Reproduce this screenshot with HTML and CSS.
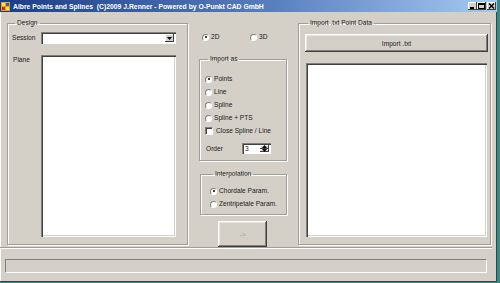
FILE: index.html
```html
<!DOCTYPE html>
<html lang="en">
<head>
    <meta charset="UTF-8">
    <title>Albre Points and Splines</title>
    <link rel="stylesheet" href="styles.css">
</head>
<body>
    <div class="window">
        <div class="titlebar">
            <svg class="app-icon" width="9" height="9" viewBox="0 0 9 9">
                <rect x="0" y="0" width="9" height="9" fill="#e8a020"/>
                <rect x="1" y="1" width="3" height="3" fill="#f8e060"/>
                <rect x="5" y="1" width="3" height="3" fill="#3060c0"/>
                <rect x="1" y="5" width="3" height="3" fill="#c03020"/>
                <rect x="5" y="5" width="3" height="3" fill="#f8e060"/>
            </svg>
            <span class="title">Albre Points and Splines&nbsp; (C)2009 J.Renner - Powered by O-Punkt CAD GmbH</span>
            <div class="caption-buttons">
                <span class="cap-btn"><svg width="7" height="6" viewBox="0 0 7 6"><rect x="1" y="4" width="4" height="2" fill="#000"/></svg></span>
                <span class="cap-btn"><svg width="7" height="6" viewBox="0 0 7 6"><rect x="0.5" y="0.5" width="6" height="5" fill="none" stroke="#000"/><rect x="0" y="0" width="7" height="2" fill="#000"/></svg></span>
                <span class="cap-btn close"><svg width="7" height="6" viewBox="0 0 7 6"><path d="M1 0.5 L6 5.5 M6 0.5 L1 5.5" stroke="#000" stroke-width="1.4"/></svg></span>
            </div>
        </div>

        <div class="client">
            <div class="panel">
                <fieldset class="group design">
                    <legend>Design</legend>
                    <div class="row">
                        <span class="label">Session</span>
                        <div class="combo">
                            <span class="combo-btn"><svg width="5" height="3" viewBox="0 0 5 3"><path d="M0 0 H5 L2.5 3 Z" fill="#000"/></svg></span>
                        </div>
                    </div>
                    <div class="row plane-row">
                        <span class="label">Plane</span>
                        <div class="listbox plane-list"></div>
                    </div>
                </fieldset>

                <div class="middle">
                    <div class="dims">
                        <span class="option"><span class="radio checked"></span>2D</span>
                        <span class="option"><span class="radio"></span>3D</span>
                    </div>

                    <fieldset class="group import-as">
                        <legend>Import as</legend>
                        <div class="option"><span class="radio checked"></span>Points</div>
                        <div class="option"><span class="radio"></span>Line</div>
                        <div class="option"><span class="radio"></span>Spline</div>
                        <div class="option"><span class="radio"></span>Spline + PTS</div>
                        <div class="option check-row"><span class="checkbox"></span>Close Spline / Line</div>
                        <div class="order-row">
                            <span class="order-label">Order</span>
                            <div class="spinner">
                                <span class="spin-value">3</span>
                                <span class="spin-btns">
                                    <span class="spin-btn"><svg width="5" height="3" viewBox="0 0 5 3"><path d="M0 3 H5 L2.5 0 Z" fill="#000"/></svg></span>
                                    <span class="spin-btn"><svg width="5" height="3" viewBox="0 0 5 3"><path d="M0 0 H5 L2.5 3 Z" fill="#000"/></svg></span>
                                </span>
                            </div>
                        </div>
                    </fieldset>

                    <fieldset class="group interp">
                        <legend>Interpolation</legend>
                        <div class="option"><span class="radio checked"></span>Chordale Param.</div>
                        <div class="option"><span class="radio"></span>Zentripetale Param.</div>
                    </fieldset>

                    <button class="btn go" disabled>-&gt;</button>
                </div>

                <fieldset class="group import">
                    <legend>Import .txt Point Data</legend>
                    <button class="btn import-btn">Import .txt</button>
                    <div class="listbox data-list"></div>
                </fieldset>
            </div>
            <div class="statusbar"></div>
        </div>
    </div>
</body>
</html>
```

FILE: styles.css
```css
body { margin: 0; background: #3a8a84; font-family: "Liberation Sans", Arial, sans-serif; font-size: 6.6px; color: #1a1a1a; }

.window { width: 497px; height: 282px; background: #d4d0c8; box-shadow: inset -1px -1px 0 #404040, inset 1px 1px 0 #fff; overflow: hidden; }

/* title bar */
.titlebar { height: 12px; display: flex; align-items: center; background: linear-gradient(to right, #1a3c86, #5a7fc0 55%, #a6caf0); padding-left: 1px; }
.app-icon { flex: none; margin-right: 3px; }
.title { color: #fff; font-weight: bold; font-size: 6.8px; white-space: pre; flex: 1; }
.caption-buttons { display: flex; margin-right: 1px; }
.cap-btn { width: 9px; height: 8px; display: flex; align-items: center; justify-content: center; background: #d4d0c8; box-shadow: inset -1px -1px 0 #404040, inset 1px 1px 0 #fff; }
.cap-btn.close { margin-left: 1px; }

/* client area */
.client { padding: 7px 0 0 7px; }
.panel { display: flex; height: 226px; padding-bottom: 2px; border-bottom: 1px solid #a09d96; box-shadow: 0 1px 0 #fff; margin-left: -7px; padding-left: 7px; margin-right: 5px; }

.group { margin: 0; padding: 0; border: 1px solid #a09d96; box-shadow: 1px 1px 0 #fff, inset 1px 1px 0 #fff; min-width: 0; box-sizing: border-box; }
.group legend { padding: 0 2px; margin-left: 3px; line-height: 8px; font-size: 6.6px; }

/* design group */
.design { width: 181px; height: 226px; padding: 5px 0 0 4px; }
.row { display: flex; align-items: flex-start; }
.label { width: 29px; flex: none; line-height: 12px; }
.combo { width: 135px; height: 12px; box-sizing: border-box; background: #fff; box-shadow: inset 1px 1px 0 #808080, inset 2px 2px 0 #404040, inset -1px -1px 0 #fff; display: flex; justify-content: flex-end; padding: 2px; }
.combo-btn { width: 9px; height: 8px; background: #d4d0c8; box-shadow: inset -1px -1px 0 #404040, inset 1px 1px 0 #fff; display: flex; align-items: center; justify-content: center; }
.plane-row { margin-top: 11px; }
.plane-row .label { line-height: 9px; padding-left: 1px; width: 28px; }
.listbox { background: #fff; box-sizing: border-box; box-shadow: inset 1px 1px 0 #808080, inset 2px 2px 0 #404040, inset -1px -1px 0 #fff, inset -2px -2px 0 #d4d0c8; }
.plane-list { width: 135px; height: 182px; }

/* middle column */
.middle { width: 110px; flex: none; }
.dims { display: flex; margin-top: 13px; padding-left: 14px; }
.dims .option { width: 50px; }
.option { display: flex; align-items: center; height: 10px; line-height: 10px; white-space: nowrap; }
.radio { width: 7px; height: 7px; border-radius: 50%; background: #fff; box-sizing: border-box; border: 1px solid; border-color: #808080 #fff #fff #808080; margin-right: 2px; position: relative; flex: none; }
.radio.checked::after { content: ""; position: absolute; left: 1.5px; top: 1.5px; width: 2px; height: 2px; border-radius: 50%; background: #000; }
.checkbox { width: 8px; height: 8px; background: #fff; box-sizing: border-box; border: 1px solid; border-color: #808080 #fff #fff #808080; box-shadow: inset 1px 1px 0 #404040; margin-right: 3px; flex: none; }

.import-as { width: 88px; height: 106px; margin: 13px 0 0 11px; padding: 11px 0 0 5px; }
.import-as .option + .option { margin-top: 3px; }
.import-as .check-row { margin-top: 5px; }
.order-row { display: flex; align-items: center; margin-top: 7px; height: 11px; padding-left: 1px; }
.order-label { width: 36px; }
.spinner { width: 29px; height: 11px; box-sizing: border-box; background: #fff; box-shadow: inset 1px 1px 0 #808080, inset 2px 2px 0 #404040, inset -1px -1px 0 #fff; display: flex; justify-content: space-between; padding: 2px; }
.spin-value { line-height: 7px; padding-left: 1px; }
.spin-btns { display: flex; flex-direction: column; width: 9px; }
.spin-btn { flex: 1; background: #d4d0c8; box-shadow: inset -1px -1px 0 #404040, inset 1px 1px 0 #fff; display: flex; align-items: center; justify-content: center; }

.interp { width: 87px; height: 45px; margin: 9px 0 0 12px; padding: 8px 0 0 9px; }
.interp .option + .option { margin-top: 3px; }

.btn { font-family: inherit; font-size: 6.6px; background: #d4d0c8; border: none; padding: 0; box-shadow: inset -1px -1px 0 #404040, inset 1px 1px 0 #fff, inset -2px -2px 0 #808080, inset 2px 2px 0 #e8e6e0; color: #1a1a1a; }
.go { display: block; width: 49px; height: 26px; margin: 6px 0 0 30px; color: #a09d96; }

/* import group */
.import { width: 193px; height: 226px; padding: 7px 0 0 6px; }
.import-btn { display: block; width: 183px; height: 18px; }
.data-list { width: 181px; height: 174px; margin: 11px 0 0 1px; }

.statusbar { width: 482px; height: 14px; box-sizing: border-box; margin: 11px 0 0 -2px; border: 1px solid; border-color: #808080 #fff #fff #808080; }
```
